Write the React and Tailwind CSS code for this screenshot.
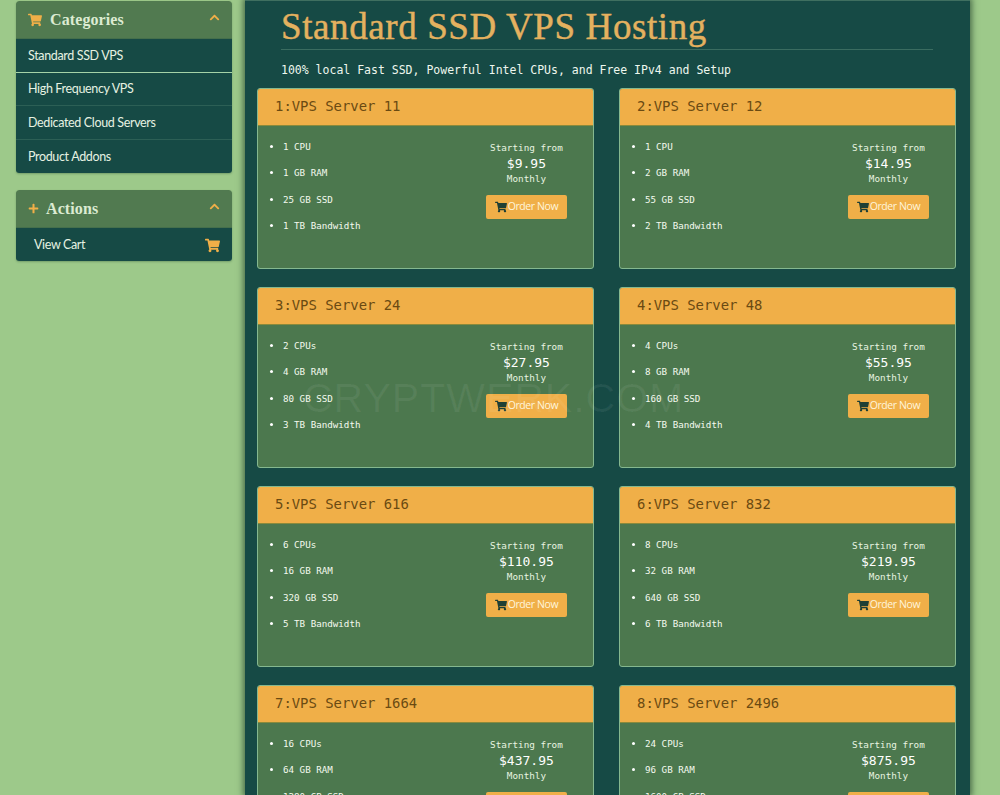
import { FaShoppingCart, FaPlus, FaChevronUp } from "react-icons/fa";

const plans = [
  { id: 1, name: "VPS Server 11", specs: ["1 CPU", "1 GB RAM", "25 GB SSD", "1 TB Bandwidth"], price: "$9.95" },
  { id: 2, name: "VPS Server 12", specs: ["1 CPU", "2 GB RAM", "55 GB SSD", "2 TB Bandwidth"], price: "$14.95" },
  { id: 3, name: "VPS Server 24", specs: ["2 CPUs", "4 GB RAM", "80 GB SSD", "3 TB Bandwidth"], price: "$27.95" },
  { id: 4, name: "VPS Server 48", specs: ["4 CPUs", "8 GB RAM", "160 GB SSD", "4 TB Bandwidth"], price: "$55.95" },
  { id: 5, name: "VPS Server 616", specs: ["6 CPUs", "16 GB RAM", "320 GB SSD", "5 TB Bandwidth"], price: "$110.95" },
  { id: 6, name: "VPS Server 832", specs: ["8 CPUs", "32 GB RAM", "640 GB SSD", "6 TB Bandwidth"], price: "$219.95" },
  { id: 7, name: "VPS Server 1664", specs: ["16 CPUs", "64 GB RAM", "1280 GB SSD", "7 TB Bandwidth"], price: "$437.95" },
  { id: 8, name: "VPS Server 2496", specs: ["24 CPUs", "96 GB RAM", "1600 GB SSD", "8 TB Bandwidth"], price: "$875.95" },
];

const categories = ["Standard SSD VPS", "High Frequency VPS", "Dedicated Cloud Servers", "Product Addons"];

function PanelHeader({ icon, title, gap }) {
  return (
    <div className="flex h-[38px] items-center justify-between rounded-t-[3px] bg-[#517a50] pl-3 pr-3 border-b border-[#456f4c]">
      <div className={`flex items-center ${gap} text-[#f0af48]`}>
        {icon}
        <span className="font-['Liberation_Serif',serif] text-[16px] font-bold tracking-[0.1px] text-[#dcebd2]">{title}</span>
      </div>
      <FaChevronUp size={11} className="text-[#f0af48] -mt-1" />
    </div>
  );
}

function PlanCard({ plan }) {
  return (
    <div className="h-[181px] w-[337px] overflow-hidden rounded-[3px] border border-[#85b88f] bg-[#4c784e]">
      <div className="flex h-[37px] items-center border-b border-[#8a8a3c] bg-[#f0af48] pb-[2px] pl-[17px] text-[13.9px] text-[#6a4a12]">
        {plan.id}:{plan.name}
      </div>
      <div className="flex">
        <ul className="w-[200px] list-disc pl-[25px] pt-[8px] text-[9.2px] leading-[26.4px] text-[#f4faee] marker:text-white">
          {plan.specs.map((spec) => (
            <li key={spec}>{spec}</li>
          ))}
        </ul>
        <div className="flex w-[137px] flex-col items-center pl-[3px] pt-[14px] text-[9.3px] text-[#e8f4e0]">
          <div className="leading-[16px]">Starting from</div>
          <div className="text-[13px] leading-[15px] text-white">{plan.price}</div>
          <div className="leading-[16px]">Monthly</div>
          <button className="mt-[8px] flex h-[24px] w-[81px] items-center justify-center gap-[1px] rounded-[2px] bg-[#f0af48] font-['Open_Sans',sans-serif] text-[10.5px] tracking-[-0.4px] text-[#fff5dc]">
            <FaShoppingCart size={12} className="text-[#1f3f35]" />
            Order Now
          </button>
        </div>
      </div>
    </div>
  );
}

export default function App() {
  return (
    <div className="relative flex h-[795px] overflow-hidden bg-[#9dc98a] font-['DejaVu_Sans_Mono',monospace]">
      <aside className="ml-4 mr-[13px] flex w-[216px] shrink-0 flex-col gap-[17px] pt-[1px] font-['Lato',sans-serif]">
        <div className="overflow-hidden rounded-[3px] shadow-[0_1px_2px_rgba(40,80,50,0.35)]">
          <PanelHeader icon={<FaShoppingCart size={14} />} title="Categories" gap="gap-[8px]" />
          {categories.map((item, idx) => (
            <div
              key={item}
              className={`flex h-[33.5px] items-center bg-[#164a45] pl-3 pt-[2px] text-[12.5px] tracking-[-0.35px] text-[#e6f2e2] ${
                idx === 0 ? "border-b border-[#a5d3a8]" : idx < 3 ? "border-b border-[#2c5f55]" : ""
              }`}
            >
              {item}
            </div>
          ))}
        </div>
        <div className="overflow-hidden rounded-[3px] shadow-[0_1px_2px_rgba(40,80,50,0.35)]">
          <PanelHeader icon={<FaPlus size={11} />} title="Actions" gap="gap-[7px]" />
          <div className="flex h-[33px] items-center justify-between bg-[#164a45] pl-[18px] pr-3 pt-[1px] text-[12.5px] tracking-[-0.35px] text-[#e6f2e2]">
            View Cart
            <FaShoppingCart size={15} className="text-[#f0af48]" />
          </div>
        </div>
      </aside>

      <main className="w-[725px] shrink-0 border-t border-[#3f6f60] bg-[#164a45] shadow-[0_0_6px_2px_rgba(30,60,40,0.65)]">
        <div className="ml-[36px] mr-[37px]">
          <h1 className="h-[49px] border-b border-[#3a6c60] pt-[4px] font-['Liberation_Serif',serif] text-[37px] leading-[44px] tracking-[0.6px] text-[#e4b15f] [-webkit-text-stroke:0.4px_#e4b15f]">
            Standard SSD VPS Hosting
          </h1>
          <p className="mt-[12px] text-[11.5px] leading-[16px] text-[#eef7ee]">
            100% local Fast SSD, Powerful Intel CPUs, and Free IPv4 and Setup
          </p>
        </div>
        <div className="mt-[10px] grid grid-cols-[337px_337px] gap-x-[25px] gap-y-[18px] pl-3">
          {plans.map((plan) => (
            <PlanCard key={plan.id} plan={plan} />
          ))}
        </div>
      </main>

      <div className="pointer-events-none absolute left-[303px] top-[374px] font-['Liberation_Sans',sans-serif] text-[41px] leading-[48px] tracking-[1px] text-white/[0.06]">
        CRYPTWERK.COM
      </div>
    </div>
  );
}
